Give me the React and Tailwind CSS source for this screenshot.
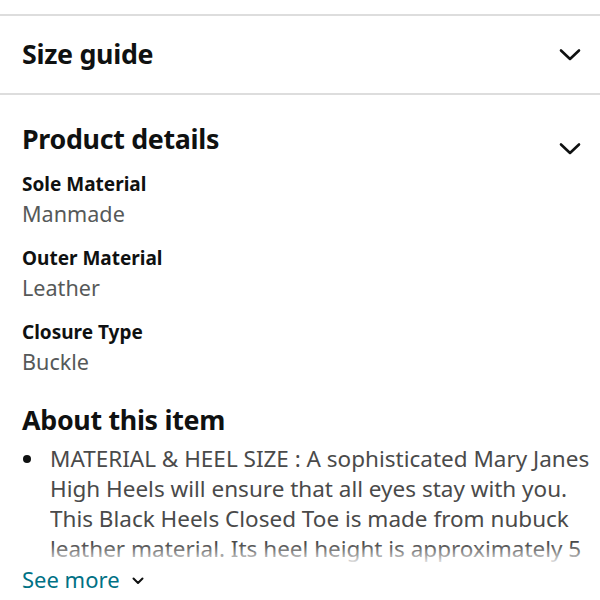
import React from "react";

const Chevron = ({ className = "" }) => (
  <svg className={className} width="22" height="14" viewBox="0 0 22 14" fill="none">
    <path d="M2 2.5 L11 11 L20 2.5" stroke="#0f1111" strokeWidth="2.6" strokeLinecap="round" strokeLinejoin="round" />
  </svg>
);

const Detail = ({ label, value }) => (
  <div className="flex flex-col">
    <div className="text-[19px] leading-[30px] font-bold text-[#0f1111]">{label}</div>
    <div className="text-[21.6px] leading-[30px] text-[#565959]">{value}</div>
  </div>
);

const lines = [
  "MATERIAL & HEEL SIZE : A sophisticated Mary Janes",
  "High Heels will ensure that all eyes stay with you.",
  "This Black Heels Closed Toe is made from nubuck",
  "leather material. Its heel height is approximately 5",
];

export default function App() {
  return (
    <div className="w-[600px] h-[600px] overflow-hidden bg-white" style={{ fontFamily: '"Noto Sans", Roboto, sans-serif' }}>
      <div className="h-[14px]" />
      <div className="h-[2px] bg-[#dddddd]" />
      <div className="h-[77px] flex items-center justify-between pl-[22px] pr-[19px]">
        <div className="text-[26.8px] font-bold text-[#0f1111] tracking-[-0.3px]">Size guide</div>
        <Chevron />
      </div>
      <div className="h-[2px] bg-[#dddddd]" />
      <div className="px-[22px]">
        <div className="flex justify-between items-start pt-[22px]">
          <div className="text-[26.8px] leading-[44px] font-bold text-[#0f1111] tracking-[-0.3px]">Product details</div>
          <Chevron className="mt-[25px] mr-[-3px]" />
        </div>
        <div className="flex flex-col gap-[14px] mt-[8px]">
          <Detail label="Sole Material" value="Manmade" />
          <Detail label="Outer Material" value="Leather" />
          <Detail label="Closure Type" value="Buckle" />
        </div>
        <div className="text-[26.8px] leading-[44px] font-bold text-[#0f1111] mt-[21px] tracking-[-0.3px]">About this item</div>
        <div className="relative mt-[2px] mr-[-22px]">
          <div className="flex">
            <div className="w-[28px] shrink-0 flex justify-start pt-[11px] pl-[1px]">
              <div className="w-[8px] h-[8px] rounded-full bg-[#0f1111]" />
            </div>
            <div className="text-[22.5px] leading-[30px] text-[#4a4a4a] h-[120px] overflow-hidden">
              {lines.map((l) => (
                <div key={l} className="whitespace-nowrap">{l}</div>
              ))}
            </div>
          </div>
          <div className="absolute left-0 right-0 bottom-0 h-[20px] bg-gradient-to-b from-white/0 to-white/90" />
        </div>
        <div className="flex items-center gap-[12px] h-[30px]">
          <span className="text-[22px] leading-[30px] text-[#007185]">See more</span>
          <svg width="12" height="8" viewBox="0 0 12 8" fill="none" className="mt-[4px]">
            <path d="M1.5 1.5 L6 6 L10.5 1.5" stroke="#0f1111" strokeWidth="2" strokeLinecap="round" strokeLinejoin="round" />
          </svg>
        </div>
      </div>
    </div>
  );
}
